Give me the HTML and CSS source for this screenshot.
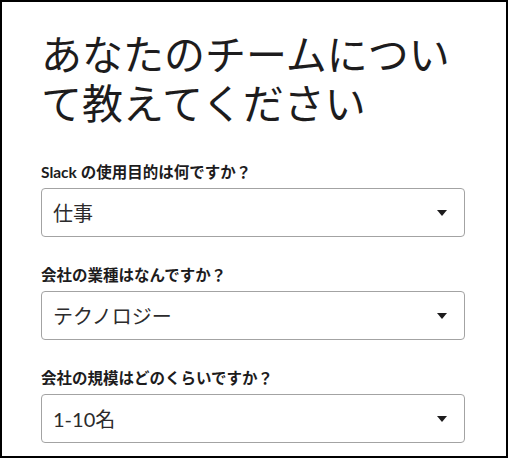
FILE: index.html
```html
<!DOCTYPE html>
<html lang="ja">
<head>
<meta charset="utf-8">
<title>チームについて</title>
<link rel="stylesheet" href="styles.css">
</head>
<body>
<div class="frame">
  <h1 class="title">あなたのチームについて教えてください</h1>
  <div class="field">
    <div class="label">Slack の使用目的は何ですか？</div>
    <div class="select"><span class="value">仕事</span><span class="caret"></span></div>
  </div>
  <div class="field">
    <div class="label">会社の業種はなんですか？</div>
    <div class="select"><span class="value">テクノロジー</span><span class="caret"></span></div>
  </div>
  <div class="field">
    <div class="label">会社の規模はどのくらいですか？</div>
    <div class="select"><span class="value">1-10名</span><span class="caret"></span></div>
  </div>
</div>
</body>
</html>
```
FILE: styles.css
```css
html, body {
  margin: 0;
  padding: 0;
  background: #fff;
}
.frame {
  box-sizing: border-box;
  width: 508px;
  height: 458px;
  border: 2px solid #000;
  padding: 28px 41px 0 39px;
  font-family: "Lato", "Noto Sans CJK JP", sans-serif;
  color: #1d1c1d;
  overflow: hidden;
}
.title {
  margin: 0 0 34px 0;
  font-size: 41px;
  line-height: 49px;
  font-weight: 400;
}
.field {
  margin-bottom: 28px;
}
.label {
  font-size: 15.5px;
  line-height: 20px;
  font-weight: 700;
  margin-bottom: 6px;
}
.select {
  box-sizing: border-box;
  height: 49px;
  border: 1px solid #a3a3a3;
  border-radius: 4px;
  display: flex;
  align-items: center;
  justify-content: space-between;
  padding: 0 17px 0 11px;
}
.value {
  font-size: 20px;
  line-height: 24px;
  font-weight: 400;
  color: #2c2b2c;
}
.caret {
  width: 0;
  height: 0;
  border-left: 5.5px solid transparent;
  border-right: 5.5px solid transparent;
  border-top: 6px solid #1d1c1d;
}
```
